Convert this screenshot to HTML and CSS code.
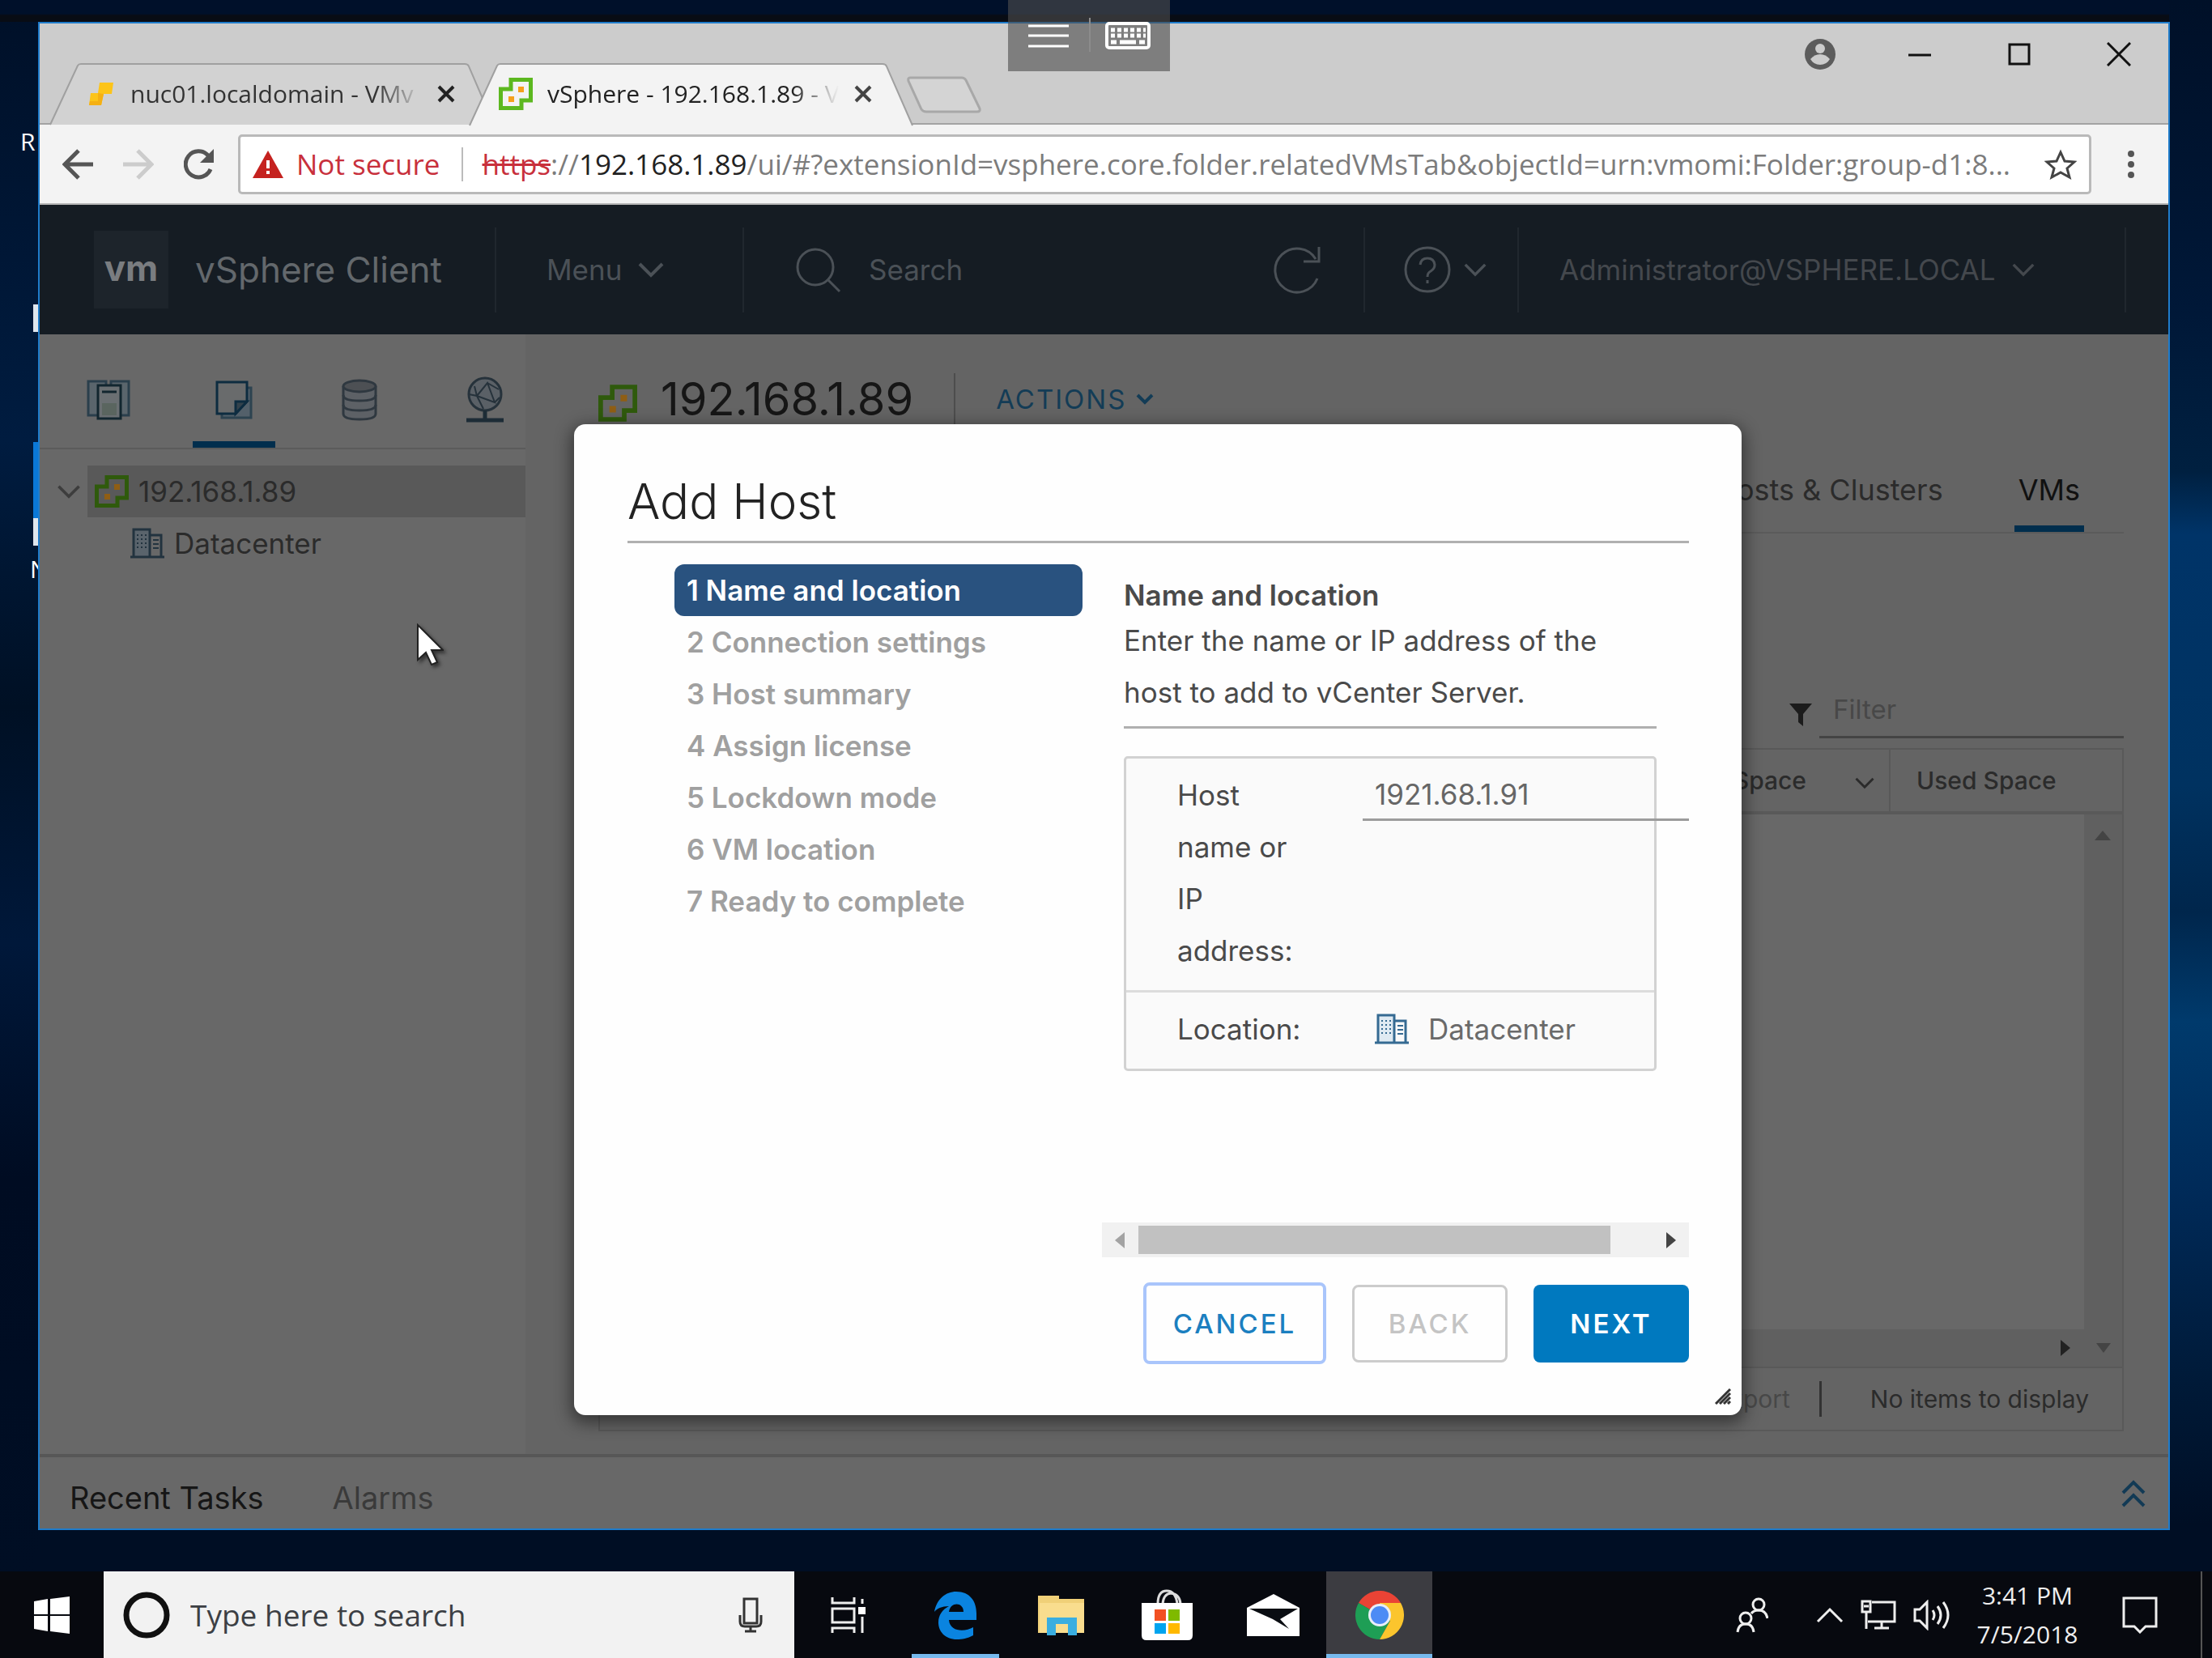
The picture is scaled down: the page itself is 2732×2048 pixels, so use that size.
FILE: index.html
```html
<!DOCTYPE html>
<html lang="en">
<head>
<meta charset="utf-8">
<title>vSphere - 192.168.1.89</title>
<link rel="stylesheet" href="styles.css">
</head>
<body>
<svg class="defs" aria-hidden="true">
  <symbol id="vcenter" viewBox="0 0 42 40">
    <path d="M15 2.500H39.500V28H28V37.500H2.500V14H15z" fill="none" stroke="currentColor" stroke-width="5"/>
    <path class="dot" d="M24 11h7v7h-7zM12 23h7v7h-7z"/>
  </symbol>
  <symbol id="datacenter" viewBox="0 0 42 38">
    <path class="wall" d="M4 36V2h20v34z"/>
    <path d="M4 36V2h20v34M24 9h14v27M0 36h42" fill="none" stroke="currentColor" stroke-width="3"/>
    <path d="M9 8v18M14 8v18M19 8v18" fill="none" stroke="currentColor" stroke-width="2" stroke-dasharray="2 3"/>
    <path d="M28 15h7M28 20h7M28 25h7" fill="none" stroke="currentColor" stroke-width="2"/>
  </symbol>
  <symbol id="chevron" viewBox="0 0 32 20">
    <path d="M2 3l14 14L30 3" fill="none" stroke="currentColor" stroke-width="4"/>
  </symbol>
</svg>

<div class="desktop">
  <span class="desk-label desk-r">R</span>
  <span class="desk-tile desk-a"></span>
  <span class="desk-tile desk-b"></span>
  <span class="desk-tile desk-c"></span>
  <span class="desk-label desk-n">N</span>

  <div class="window">
    <header class="titlebar">
      <div class="tabs">
        <div class="tab">
          <svg class="tab-shape" viewBox="0 0 548 77" preserveAspectRatio="none"><path d="M0 77L34 4Q35 2 38 2H512Q516 2 517 5L548 77" fill="#d2d2d2" stroke="#a0a0a0" stroke-width="2"/></svg>
          <svg class="fav-yellow" viewBox="0 0 34 32"><path d="M15 2h17l-2 14H20l-3 14H2l2-15h9z" fill="#fcc419"/><path d="M13 15l7 1-3 14H2l1-5h10z" fill="#f5b013"/></svg>
          <span class="tab-title">nuc01.localdomain - VMv</span>
          <button class="tab-close" aria-label="Close tab"><svg viewBox="0 0 24 24"><path d="M3 3l18 18M21 3L3 21" stroke="#222" stroke-width="4"/></svg></button>
        </div>
        <div class="tab active">
          <svg class="tab-shape" viewBox="0 0 548 77" preserveAspectRatio="none"><path d="M0 78L34 4Q35 2 38 2H510Q514 2 515 5L547 78" fill="#f3f3f3" stroke="#a0a0a0" stroke-width="2"/></svg>
          <svg class="fav-vc"><use href="#vcenter"/></svg>
          <span class="tab-title">vSphere - 192.168.1.89 - V</span>
          <button class="tab-close" aria-label="Close tab"><svg viewBox="0 0 24 24"><path d="M3 3l18 18M21 3L3 21" stroke="#444" stroke-width="4"/></svg></button>
        </div>
        <button class="tab-new" aria-label="New tab"><svg viewBox="0 0 92 46"><path d="M4 2H68Q71 2 73 5L90 40Q91 44 87 44H24Q20 44 18 41L2 6Q1 2 4 2z" fill="#d4d4d4" stroke="#a8a8a8" stroke-width="3"/></svg></button>
      </div>
      <div class="win-controls">
        <button aria-label="Profile"><svg width="38" height="38" viewBox="0 0 38 38"><circle cx="19" cy="19" r="19" fill="#5c5c5c"/><circle cx="19" cy="12" r="6" fill="#ccc"/><path d="M7 25q5-6 12-6t12 6q-4 7-12 7T7 25z" fill="#ccc"/></svg></button>
        <button aria-label="Minimize"><svg width="28" height="28" viewBox="0 0 28 28"><path d="M0 15h28" stroke="#111" stroke-width="3"/></svg></button>
        <button aria-label="Maximize"><svg width="28" height="28" viewBox="0 0 28 28"><path d="M2 2h24v24H2z" fill="none" stroke="#111" stroke-width="3"/></svg></button>
        <button aria-label="Close"><svg width="30" height="30" viewBox="0 0 30 30"><path d="M1 1l28 28M29 1L1 29" stroke="#111" stroke-width="3"/></svg></button>
      </div>
    </header>

    <div class="toolbar">
      <button aria-label="Back"><svg width="38" height="38" viewBox="0 0 38 38"><path d="M38 19H4M20 2L3 19l17 17" fill="none" stroke="#555" stroke-width="5"/></svg></button>
      <button aria-label="Forward"><svg width="38" height="38" viewBox="0 0 38 38"><path d="M0 19h34M18 2l17 17-17 17" fill="none" stroke="#ccc" stroke-width="5"/></svg></button>
      <button aria-label="Reload"><svg width="38" height="38" viewBox="0 0 38 38"><path d="M33 25A16 16 0 1 1 30 8" fill="none" stroke="#555" stroke-width="5"/><path d="M37 0v17H20z" fill="#555"/></svg></button>
      <div class="omnibox">
        <svg width="38" height="34" viewBox="0 0 38 34"><path d="M19 0l19 34H0z" fill="#c5221f"/><path d="M19 12v10M19 25v4" stroke="#fff" stroke-width="4"/></svg>
        <span class="insecure">Not secure</span>
        <a class="url" href="#"><s>https</s>://<b>192.168.1.89</b>/ui/#?extensionId=vsphere.core.folder.relatedVMsTab&amp;objectId=urn:vmomi:Folder:group-d1:8...</a>
        <button aria-label="Bookmark"><svg width="40" height="38" viewBox="0 0 40 38"><path d="M20 4l5 11 12 1-9 8 3 11-11-6-11 6 3-11-9-8 12-1z" fill="none" stroke="#444" stroke-width="3"/></svg></button>
      </div>
      <button aria-label="Browser menu"><svg width="10" height="34" viewBox="0 0 10 34"><circle cx="5" cy="4" r="4" fill="#555"/><circle cx="5" cy="17" r="4" fill="#555"/><circle cx="5" cy="30" r="4" fill="#555"/></svg></button>
    </div>

    <div class="app">
      <div class="app-header">
        <div class="cell brand"><span class="logo">vm</span><span>vSphere Client</span></div>
        <button class="cell menu">Menu <svg class="chev"><use href="#chevron"/></svg></button>
        <div class="cell find">
          <svg width="58" height="58" viewBox="0 0 58 58"><circle cx="24" cy="26" r="22" fill="none" stroke="currentColor" stroke-width="3"/><path d="M40 42l14 14" stroke="currentColor" stroke-width="3"/></svg>
          <input type="text" aria-label="Search" placeholder="Search">
          <button aria-label="Refresh"><svg width="60" height="60" viewBox="0 0 60 60"><path d="M55 41A27 27 0 1 1 53 17M57 2v18H38" fill="none" stroke="currentColor" stroke-width="3"/></svg></button>
        </div>
        <button class="cell help" aria-label="Help"><svg width="58" height="58" viewBox="0 0 58 58"><circle cx="29" cy="29" r="27" fill="none" stroke="currentColor" stroke-width="3"/><path d="M20 23q1-8 9-8t9 8q0 5-5 8-4 2-4 7M29 42v4" fill="none" stroke="currentColor" stroke-width="3"/></svg><svg class="chev small"><use href="#chevron"/></svg></button>
        <button class="cell user">Administrator@VSPHERE.LOCAL <svg class="chev small"><use href="#chevron"/></svg></button>
      </div>

      <div class="app-body">
        <aside class="sidebar">
          <nav class="inv-tabs">
            <button aria-label="Hosts and Clusters"><svg width="54" height="52" viewBox="0 0 54 52"><path d="M13 45H2V3h22v4M30 7V3h22v42H42" fill="#5a656c" stroke="#2a3f4c" stroke-width="3"/><path d="M14 8h28v41H14z" fill="#6a6f72" stroke="#12262f" stroke-width="3"/><path d="M19 16h18" stroke="#12262f" stroke-width="3"/><path d="M19 30h18v15H19z" fill="#5a655f"/></svg></button>
            <button class="on" aria-label="VMs and Templates"><svg width="46" height="50" viewBox="0 0 46 50"><path d="M8 42v5h36V10h-5" fill="#53606a" stroke="#2d4350" stroke-width="3"/><path d="M2 3h37v24L25 42H2z" fill="#696b6c" stroke="#0d2c40" stroke-width="3"/><path d="M39 27H25v15z" fill="#33424c" stroke="#0d2c40" stroke-width="3"/></svg></button>
            <button aria-label="Storage"><svg width="44" height="52" viewBox="0 0 44 52"><path d="M2 9v34q0 7 20 7t20-7V9" fill="#5d6166" stroke="#2f3840" stroke-width="3"/><ellipse cx="22" cy="9" rx="20" ry="7" fill="#4d5054" stroke="#2f3840" stroke-width="3"/><path d="M2 20q0 7 20 7t20-7M2 32q0 7 20 7t20-7" fill="none" stroke="#2f3840" stroke-width="3"/></svg></button>
            <button aria-label="Networking"><svg width="46" height="58" viewBox="0 0 46 58"><circle cx="23" cy="22" r="20" fill="#5a6066" stroke="#26323b" stroke-width="3"/><path d="M13 24L26 8l9 24zM3 22l10 2 8 16M26 8l14 8M13 24l-3-12M35 32l6-6" fill="none" stroke="#26323b" stroke-width="2"/><path d="M23 42v12M0 54h46" stroke="#1d2c36" stroke-width="5"/></svg></button>
          </nav>
          <ul class="tree">
            <li class="node root"><svg class="chev tw"><use href="#chevron"/></svg><span class="pick"><svg class="vc"><use href="#vcenter"/></svg>192.168.1.89</span></li>
            <li class="node child"><svg class="dc"><use href="#datacenter"/></svg>Datacenter</li>
          </ul>
        </aside>

        <main class="main">
          <div class="object-head">
            <svg class="vc big"><use href="#vcenter"/></svg>
            <h1>192.168.1.89</h1>
            <button class="actions">ACTIONS <svg class="chev" viewBox="0 0 22 14"><path d="M2 2l9 9 9-9" fill="none" stroke="currentColor" stroke-width="4"/></svg></button>
          </div>
          <nav class="obj-tabs"><a href="#">Hosts &amp; Clusters</a><a class="on" href="#">VMs</a></nav>
          <div class="filter-row">
            <svg width="30" height="28" viewBox="0 0 30 28"><path d="M1 0h28L18 13v15l-6-5V13z" fill="#1c1c1c"/></svg>
            <input type="text" aria-label="Filter" placeholder="Filter">
          </div>
          <div class="grid">
            <table>
              <thead><tr><th class="prov">Provisioned Space<svg class="chev"><use href="#chevron"/></svg></th><th class="used">Used Space</th></tr></thead>
            </table>
            <div class="grid-body">
              <div class="rows"></div>
              <div class="vbar"><svg width="20" height="12" viewBox="0 0 20 12"><path d="M10 0l10 12H0z" fill="#444"/></svg></div>
            </div>
            <div class="hbar"><svg width="12" height="20" viewBox="0 0 12 20"><path d="M0 0l12 10L0 20z" fill="#222"/></svg><svg width="18" height="12" viewBox="0 0 18 12"><path d="M0 0h18L9 12z" fill="#444"/></svg></div>
            <div class="grid-foot"><button class="export" disabled>Export</button><span class="count">No items to display</span></div>
          </div>
        </main>
      </div>

      <footer class="app-foot">
        <button class="strong">Recent Tasks</button><button>Alarms</button>
        <button class="up" aria-label="Expand"><svg width="30" height="34" viewBox="0 0 30 34"><path d="M2 16L15 3l13 13M2 32l13-13 13 13" fill="none" stroke="#123a55" stroke-width="4"/></svg></button>
      </footer>

      <form class="dialog" role="dialog" aria-labelledby="dlg-title">
        <h2 id="dlg-title">Add Host</h2>
        <div class="dlg-body">
          <ol class="steps">
            <li class="on">1 Name and location</li>
            <li>2 Connection settings</li>
            <li>3 Host summary</li>
            <li>4 Assign license</li>
            <li>5 Lockdown mode</li>
            <li>6 VM location</li>
            <li>7 Ready to complete</li>
          </ol>
          <div class="pane">
            <div class="page">
              <h3>Name and location</h3>
              <p>Enter the name or IP address of the host to add to vCenter Server.</p>
              <div class="fields">
                <div class="field"><label for="host">Host name or IP address:</label><input id="host" type="text" value="1921.68.1.91"></div>
                <div class="field"><span class="label">Location:</span><span class="value"><svg class="dc"><use href="#datacenter"/></svg>Datacenter</span></div>
              </div>
            </div>
            <div class="scrollbar">
              <svg width="12" height="20" viewBox="0 0 12 20"><path d="M12 0v20L0 10z" fill="#a3a3a3"/></svg>
              <span class="thumb"></span>
              <svg width="12" height="20" viewBox="0 0 12 20"><path d="M0 0l12 10L0 20z" fill="#444"/></svg>
            </div>
          </div>
        </div>
        <div class="dlg-actions">
          <button type="button" class="btn cancel">CANCEL</button>
          <button type="button" class="btn back" disabled>BACK</button>
          <button type="button" class="btn next">NEXT</button>
        </div>
        <svg class="grip" width="20" height="20" viewBox="0 0 20 20"><path d="M1 19L19 1M6 19L19 6M11 19l8-8M16 19l3-3" stroke="#333" stroke-width="3"/></svg>
      </form>
    </div>
  </div>

  <div class="remote-bar">
    <button aria-label="Session menu"><svg width="50" height="30" viewBox="0 0 50 30"><path d="M0 3h50M0 15h50M0 28h50" stroke="#fff" stroke-width="3"/></svg></button>
    <button aria-label="Keyboard"><svg width="56" height="34" viewBox="0 0 56 34"><rect x="2" y="2" width="52" height="30" rx="3" fill="none" stroke="#fff" stroke-width="4"/><path d="M7 10h43M7 17h43" stroke="#fff" stroke-width="5" stroke-dasharray="5 3"/><path d="M7 25h7M18 25h20M42 25h7" stroke="#fff" stroke-width="5"/></svg></button>
  </div>
  <svg class="cursor" viewBox="0 0 34 52"><path d="M2 2v43l10-9 7 15 7-3-7-15h14z" fill="#fff" stroke="#222" stroke-width="2"/></svg>
</div>

<div class="taskbar">
  <button class="start" aria-label="Start"><svg width="44" height="46" viewBox="0 0 44 46"><path d="M0 6l17-3v19H0zM20 3l24-3v22H20zM0 24h17v19L0 40zM20 24h24v22l-24-3z" fill="#fff"/></svg></button>
  <label class="cortana">
    <svg width="58" height="60" viewBox="0 0 58 60"><circle cx="29" cy="30" r="25" fill="none" stroke="#111" stroke-width="7"/></svg>
    <input type="text" aria-label="Type here to search" placeholder="Type here to search">
    <svg width="30" height="44" viewBox="0 0 30 44"><rect x="7" y="2" width="16" height="30" fill="none" stroke="#333" stroke-width="3"/><path d="M2 22v8q0 6 6 6h14q6 0 6-6v-8M15 36v6M8 42h14" fill="none" stroke="#333" stroke-width="3"/></svg>
  </label>
  <div class="apps">
    <button aria-label="Task View"><svg width="44" height="44" viewBox="0 0 44 44"><path d="M2 0v7h27V0M2 14h27v17H2zM2 44v-6h27v6M39 2v6M39 24v20" fill="none" stroke="#eee" stroke-width="3"/><path d="M34 12h9v9h-9z" fill="#fff"/></svg></button>
    <button class="open" aria-label="Edge"><svg width="54" height="60" viewBox="0 0 54 60"><path d="M1 26C4 10 15 1 28 1c17 0 25 12 25 27v8H19c1 15 20 15 30 9v10c-7 4-14 5-20 5C14 60 6 50 6 39c0-9 5-16 13-20C10 19 4 22 1 26zM19 26h18c0-12-16-13-18 0z" fill="#0a84e0"/></svg></button>
    <button aria-label="File Explorer"><svg width="58" height="50" viewBox="0 0 58 50"><path d="M0 1h26v4h31v42H0z" fill="#f0d078"/><path d="M2 10h55v37H2z" fill="#f9dd8e"/><path d="M11 28h37v22H37V36H22v14H11z" fill="#3aaee0"/></svg></button>
    <button aria-label="Store"><svg width="64" height="64" viewBox="0 0 64 64"><path d="M20 18Q20 2 31 2t13 16M26 18Q27 6 36 5q11 1 12 13" fill="none" stroke="#ddd" stroke-width="3"/><path d="M0 17h63v40q0 6-6 6H6q-6 0-6-6z" fill="#fff"/><path d="M16 25h14v14H16z" fill="#f25022"/><path d="M33 25h14v14H33z" fill="#7fba00"/><path d="M16 42h14v13H16z" fill="#00a4ef"/><path d="M33 42h14v13H33z" fill="#ffb900"/></svg></button>
    <button aria-label="Mail"><svg width="66" height="52" viewBox="0 0 66 52"><path d="M0 17L33 0l32 17v35H0z" fill="#fff"/><path d="M3 18h60L41 31l11 12-20-12z" fill="#0a0d12"/></svg></button>
    <button class="open current" aria-label="Chrome"><svg width="60" height="60" viewBox="0 0 60 60"><path d="M30 30L4 15A30 30 0 0 1 56 15z" fill="#ea4335"/><path d="M30 30L4 15A30 30 0 0 0 30 60L43 37z" fill="#1e9e55"/><path d="M30 30V15h26A30 30 0 0 1 30 60l13-23z" fill="#fbc52d"/><circle cx="30" cy="30" r="14" fill="#e8eef8"/><circle cx="30" cy="30" r="11" fill="#4c8bf5"/></svg></button>
  </div>
  <div class="tray">
    <svg width="40" height="44" viewBox="0 0 40 44"><g fill="none" stroke="#eee" stroke-width="3"><circle cx="28" cy="9" r="7"/><circle cx="12" cy="26" r="7"/><path d="M19 20q3-4 9-4 9 0 11 10M2 43q1-10 10-10t10 10"/></g></svg>
    <svg width="34" height="20" viewBox="0 0 34 20"><path d="M2 18L17 3l15 15" fill="none" stroke="#eee" stroke-width="3"/></svg>
    <svg width="44" height="38" viewBox="0 0 44 38"><path d="M14 3h28v24H9M26 27v8M17 35h18M2 2h10v13H2zM7 15v21M4 8h6" fill="none" stroke="#eee" stroke-width="3"/></svg>
    <svg width="46" height="38" viewBox="0 0 46 38"><path d="M2 12h6l9-9v32l-9-9H2zM24 13q4 6 0 12M30 8q8 11 0 22M37 3q12 16 0 32" fill="none" stroke="#eee" stroke-width="3"/></svg>
  </div>
  <div class="clock"><span>3:41 PM</span><span>7/5/2018</span></div>
  <button class="notes" aria-label="Notifications"><svg width="44" height="46" viewBox="0 0 44 46"><path d="M2 2h40v35H29l-7 7-7-7H2z" fill="none" stroke="#eee" stroke-width="3"/></svg></button>
</div>
</body>
</html>
```
FILE: styles.css
```css
* { box-sizing: border-box; }
body {
  margin: 0;
  min-height: 100vh;
  display: flex;
  flex-direction: column;
  background: #001028;
  font-family: "Open Sans", "Noto Sans", sans-serif;
}
button, input {
  font: inherit;
  color: inherit;
  background: none;
  border: 0;
  padding: 0;
  margin: 0;
  border-radius: 0;
  outline: 0;
}
button { display: flex; align-items: center; justify-content: center; flex: none; }
svg { display: block; flex: none; }
.defs { position: absolute; width: 0; height: 0; }
ul, ol { list-style: none; margin: 0; padding: 0; }
h1, h2, h3, p { margin: 0; font-size: inherit; font-weight: 400; }
a { color: inherit; text-decoration: none; }
.dot { fill: var(--dot, #f5a11c); }
.wall { fill: var(--wall, #dfeaf2); }

/* desktop */
.desktop {
  position: relative;
  flex: 1;
  display: flex;
  padding: 27px 52px 51px 47px;
  background:
    linear-gradient(180deg, #001028 0, #001c40 28%, #001024 45%, #00183a 60%, #000c22 75%, #000e24 100%) left / 47px 100% no-repeat,
    linear-gradient(180deg, #001028 0, #001838 20%, #002040 30%, #003468 34%, #003260 50%, #00264c 58%, #003a6c 65%, #002a58 76%, #001a38 88%, #000e24 97%);
}
.desktop::before {
  content: "";
  position: absolute;
  inset: 0 53px auto 0;
  height: 27px;
  background: linear-gradient(180deg, #00102a 0 17px, #080c14 19px);
}
.desk-label { position: absolute; color: #fff; font-size: 30px; line-height: 40px; }
.desk-r { left: 25px; top: 155px; }
.desk-n { left: 37px; top: 683px; }
.desk-tile { position: absolute; left: 41px; width: 8px; height: 34px; background: #dfe6ee; }
.desk-a { top: 376px; }
.desk-b { top: 546px; height: 94px; background: #0a78d7; }
.desk-c { top: 640px; }

.window {
  position: relative;
  flex: 1;
  min-width: 0;
  display: flex;
  flex-direction: column;
  border: 2px solid #1f7ccb;
  background: #ccc;
}

/* browser chrome */
.titlebar { display: flex; justify-content: space-between; height: 125px; border-bottom: 2px solid #a3a3a3; }
.tabs { display: flex; align-items: flex-end; padding-left: 13px; }
.tab {
  position: relative;
  display: flex;
  align-items: center;
  width: 548px;
  height: 77px;
  padding-left: 46px;
  margin-bottom: -2px;
  font-size: 30px;
  color: #333;
}
.tab + .tab { margin-left: -30px; padding-left: 36px; color: #222; }
.tab-shape { position: absolute; inset: 0; width: 100%; height: 100%; overflow: visible; }
.tab > :not(.tab-shape) { position: relative; }
.fav-yellow { width: 34px; height: 32px; margin-right: 19px; }
.fav-vc { width: 42px; height: 40px; margin-right: 18px; color: #5cb81f; }
.tab-title {
  width: 360px;
  white-space: nowrap;
  -webkit-mask-image: linear-gradient(90deg, #000 84%, transparent);
  mask-image: linear-gradient(90deg, #000 84%, transparent);
}
.tab-close { margin-left: 18px; width: 24px; height: 24px; }
.tab-close svg { width: 24px; height: 24px; }
.tab-new { margin: 0 0 12px -8px; width: 92px; height: 46px; }
.tab-new svg { width: 92px; height: 46px; }
.win-controls { display: flex; align-items: flex-start; }
.win-controls button { width: 123px; height: 76px; }

.toolbar { display: flex; align-items: center; height: 99px; padding: 0 41px 0 28px; background: #f3f3f3; border-bottom: 2px solid #b5b5b5; }
.toolbar > button { margin-right: 37px; }
.toolbar > button:last-child { margin: 0; }
.omnibox {
  flex: 1;
  min-width: 0;
  display: flex;
  align-items: center;
  height: 74px;
  margin: 0 44px 0 -8px;
  padding: 0 15px;
  background: #fff;
  border: 3px solid #b9b9b9;
  border-radius: 5px;
  font-size: 35px;
  line-height: 42px;
}
.insecure { margin-left: 16px; padding-right: 26px; border-right: 2px solid #bbb; color: #c8303c; white-space: nowrap; }
.url { flex: 1; margin-left: 24px; color: #7c7c7c; white-space: nowrap; }
.url s { color: #c8303c; }
.url b { font-weight: 400; color: #222; }

/* vSphere client */
.app {
  position: relative;
  flex: 1;
  display: flex;
  flex-direction: column;
  background: #646464;
  font-family: Inter, "Open Sans", sans-serif;
  font-size: 35px;
  color: #2b2b2b;
}
.app-header { display: flex; align-items: center; height: 160px; padding-right: 52px; background: #151c23; color: #4b5157; }
.cell { display: flex; align-items: center; justify-content: flex-start; height: 105px; border-right: 2px solid #20272e; white-space: nowrap; }
.brand { width: 564px; padding-left: 67px; gap: 33px; font-size: 44px; color: #63686c; }
.logo { width: 92px; height: 96px; line-height: 92px; background: #1d242b; text-align: center; font-weight: 700; color: #7a7d80; }
.menu { width: 306px; padding-left: 62px; gap: 20px; }
.chev { width: 32px; height: 20px; }
.chev.small { width: 28px; height: 18px; }
.find { flex: 1; min-width: 0; padding: 0 52px 0 64px; gap: 32px; }
.find input { flex: 1; min-width: 0; }
::placeholder { color: inherit; opacity: 1; }
.help { width: 190px; padding-left: 48px; gap: 16px; }
.user { width: 750px; padding-left: 50px; gap: 20px; color: #44484d; }

.app-body { flex: 1; display: flex; }
.sidebar { width: 604px; background: #686868; border-right: 4px solid #646464; }
.inv-tabs { display: flex; gap: 53px; height: 142px; padding-left: 34px; border-bottom: 2px solid #5b5b5b; }
.inv-tabs button { width: 102px; padding-top: 30px; border-bottom: 8px solid transparent; }
.inv-tabs .on { border-color: #012e4d; }
.tree { padding-top: 20px; }
.node { display: flex; align-items: center; height: 64px; }
.root { padding-left: 21px; gap: 8px; }
.tw { width: 30px; height: 18px; color: #3d3d3d; }
.pick { flex: 1; display: flex; align-items: center; gap: 12px; height: 64px; padding-left: 9px; background: #595959; }
.vc { --dot: #8f5e14; width: 42px; height: 40px; color: #2f5a0c; }
.child { padding-left: 112px; gap: 12px; }
.dc { width: 42px; height: 38px; color: #22333f; }
.tree .dc { --wall: #5a646c; }

.main { flex: 1; min-width: 0; display: flex; flex-direction: column; padding: 0 55px 28px 86px; }
.object-head { display: flex; align-items: center; height: 160px; }
.big { width: 48px; height: 46px; margin-top: 10px; }
.object-head h1 { margin-left: 29px; padding-right: 50px; border-right: 2px solid #4d4d4d; font-size: 56px; line-height: 64px; color: #161616; }
.actions { margin-left: 50px; gap: 12px; letter-spacing: 2px; font-size: 33px; color: #133c56; }
.actions .chev { width: 22px; height: 14px; }
.obj-tabs { display: flex; justify-content: flex-end; gap: 88px; height: 86px; padding-right: 49px; border-bottom: 2px solid #5b5b5b; font-size: 36px; line-height: 64px; }
.obj-tabs .on { padding: 0 5px; border-bottom: 8px solid #012e4d; color: #111; }
.filter-row { display: flex; justify-content: flex-end; align-items: center; margin-top: 183px; height: 70px; gap: 8px; font-size: 33px; }
.filter-row svg { margin-top: 12px; }
.filter-row input { width: 376px; height: 70px; padding-left: 17px; border-bottom: 3px solid #444; color: #484848; }
.grid { flex: 1; display: flex; flex-direction: column; margin-top: 12px; border: 2px solid #595959; }
.grid table { width: 100%; border-collapse: collapse; font-size: 30px; }
.grid th { height: 78px; padding: 0; font-weight: 500; text-align: left; border-bottom: 4px solid #595959; }
.grid .prov { text-align: right; padding-right: 18px; border-right: 2px solid #595959; }
.prov .chev { display: inline-block; width: 24px; height: 16px; margin-left: 60px; }
.grid .used { width: 287px; padding-left: 32px; }
.grid-body { flex: 1; display: flex; }
.rows { flex: 1; background: #686868; }
.vbar { width: 47px; padding: 20px 13px; background: #606060; }
.hbar { display: flex; justify-content: flex-end; align-items: center; gap: 32px; height: 48px; padding-right: 14px; background: #606060; border-bottom: 2px solid #595959; }
.grid-foot { display: flex; justify-content: flex-end; align-items: center; height: 76px; padding-right: 41px; font-size: 30px; }
.export { height: 44px; padding-right: 36px; border-right: 3px solid #333; color: #484848; }
.count { margin-left: 60px; }

.app-foot { display: flex; align-items: center; height: 92px; padding: 12px 28px 0 37px; gap: 85px; border-top: 4px solid #575757; background: #686868; font-size: 38px; }
.app-foot button { color: #3a3a3a; }
.app-foot .strong { color: #161616; }
.app-foot .up { margin-left: auto; margin-bottom: 10px; }

/* wizard dialog */
.dialog {
  position: absolute;
  left: 660px;
  top: 271px;
  width: 1442px;
  padding: 63px 65px 63px 66px;
  background: #fefefe;
  border-radius: 14px;
  box-shadow: 0 6px 20px 4px rgba(0, 0, 0, .45);
  color: #4a4a4a;
}
.dialog h2 { line-height: 64px; padding-bottom: 17px; border-bottom: 3px solid #b0b0b0; font-size: 60px; font-weight: 300; color: #222; }
.dlg-body { display: flex; gap: 24px; padding-left: 58px; }
.steps { flex: 1; padding-top: 26px; font-weight: 600; color: #a0a0a0; line-height: 64px; }
.steps li { padding-left: 15px; border-radius: 12px; }
.steps .on { background: #29527f; color: #fff; }
.pane { width: 725px; padding-top: 40px; }
.page { padding: 0 40px 0 27px; min-height: 799px; line-height: 64px; }
.page h3 { line-height: 48px; font-weight: 600; }
.page p { padding-bottom: 10px; border-bottom: 3px solid #b0b0b0; }
.fields { margin-top: 34px; background: #fafafa; border: 3px solid #d2d2d2; border-radius: 5px; }
.field { display: flex; padding: 13px 0 17px 63px; white-space: nowrap; }
.field + .field { border-top: 3px solid #dcdcdc; }
.field label { flex: none; width: 150px; margin-right: 79px; white-space: normal; }
.field input { width: 403px; flex: none; height: 64px; padding-left: 15px; border-bottom: 3px solid #9c9c9c; color: #666; }
.field .label { width: 244px; }
.value { display: flex; align-items: center; gap: 24px; color: #6a6a6a; }
.value .dc { color: #356a92; }
.scrollbar { display: flex; align-items: center; height: 43px; padding: 0 16px; background: #f1f1f1; }
.thumb { flex: 1; height: 35px; margin: 0 69px 0 17px; background: #c1c1c1; }
.dlg-actions { display: flex; justify-content: flex-end; align-items: center; gap: 32px; margin-top: 31px; font-size: 33px; }
.btn { width: 192px; height: 96px; border-radius: 8px; letter-spacing: 3px; font-weight: 500; }
.cancel { width: 226px; height: 101px; border: 4px solid #a9c5fb; color: #1b7fc0; }
.back { border: 3px solid #ccc; color: #c4c4c4; }
.next { background: #0079bf; color: #fff; font-weight: 600; }
.grip { position: absolute; right: 13px; bottom: 13px; }

/* floating items above the session */
.remote-bar { position: absolute; left: 1245px; top: 0; display: flex; width: 200px; height: 88px; background: rgba(78, 78, 78, .62); }
.remote-bar button { width: 100px; }
.remote-bar button + button { padding-right: 5px; background: linear-gradient(#8c8c8c, #8c8c8c) 0 22px / 2px 42px no-repeat; }
.cursor { position: absolute; left: 514px; top: 770px; width: 34px; height: 52px; filter: drop-shadow(3px 3px 2px rgba(0, 0, 0, .5)); }

/* taskbar */
.taskbar { display: flex; align-items: stretch; height: 107px; padding-right: 12px; background: #07090f; color: #eee; }
.start { width: 128px; }
.cortana { display: flex; align-items: center; width: 853px; padding: 0 39px 0 24px; gap: 25px; background: #f2f2f2; color: #3c3f44; font-size: 37px; }
.cortana input { flex: 1; min-width: 0; }
.apps { display: flex; }
.apps button { width: 131px; }
.apps button:first-child { width: 133px; }
.apps .open { background: linear-gradient(#76b9ed, #76b9ed) bottom / 108px 5px no-repeat; }
.apps .current { background-color: #3c3c41; background-size: 100% 5px; }
.tray { display: flex; align-items: center; margin-left: auto; gap: 21px; }
.tray svg:first-child { margin-right: 38px; }
.clock { display: flex; flex-direction: column; justify-content: center; align-items: center; width: 190px; font-size: 30px; line-height: 48px; }
.notes { width: 88px; margin-right: 31px; }
.taskbar::after { content: ""; width: 2px; background: #555; }
```
